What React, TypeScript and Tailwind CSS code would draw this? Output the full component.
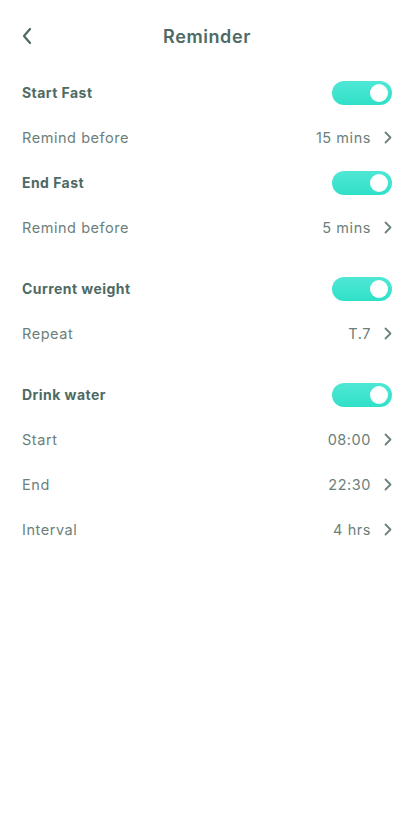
import React from "react";

const font = { fontFamily: "Inter, 'Open Sans', sans-serif" };

function Toggle() {
  return (
    <div className="w-[60px] h-[24px] rounded-full bg-gradient-to-b from-[#4ee8d5] to-[#2fe0c8] flex items-center justify-end pr-[4px]">
      <div className="w-[18px] h-[18px] rounded-full bg-white" />
    </div>
  );
}

function Chevron() {
  return (
    <svg width="8" height="13" viewBox="0 0 8 13" fill="none" className="ml-[13px]">
      <path d="M1.5 1.5L6.5 6.5L1.5 11.5" stroke="#6d827d" strokeWidth="1.8" strokeLinecap="round" strokeLinejoin="round" />
    </svg>
  );
}

function HeadRow({ label }: { label: string }) {
  return (
    <div className="h-[45px] flex items-center justify-between">
      <span className="text-[14px] font-bold text-[#4e6a64] tracking-[0.45px]">{label}</span>
      <Toggle />
    </div>
  );
}

function ValueRow({ label, value }: { label: string; value: string }) {
  return (
    <div className="h-[45px] flex items-center justify-between">
      <span className="text-[14.5px] text-[#6b807b] tracking-[0.55px]">{label}</span>
      <div className="flex items-center">
        <span className="text-[14.5px] text-[#6b807b] tracking-[0.55px]">{value}</span>
        <Chevron />
      </div>
    </div>
  );
}

export default function App() {
  return (
    <div className="w-[414px] min-h-[840px] bg-white" style={font}>
      <div className="h-[70px] relative flex items-center justify-center pt-[2px]">
        <svg width="12" height="18" viewBox="0 0 12 18" fill="none" className="absolute left-[21px] top-[27px]">
          <path d="M9 2L3 9L9 16" stroke="#4e6a64" strokeWidth="2.2" strokeLinecap="round" strokeLinejoin="round" />
        </svg>
        <span className="text-[18px] font-semibold text-[#4e6a64] tracking-[0.6px]">Reminder</span>
      </div>
      <div className="px-[22px] flex flex-col">
        <HeadRow label="Start Fast" />
        <ValueRow label="Remind before" value="15 mins" />
        <HeadRow label="End Fast" />
        <ValueRow label="Remind before" value="5 mins" />
        <div className="h-[16px]" />
        <HeadRow label="Current weight" />
        <ValueRow label="Repeat" value="T.7" />
        <div className="h-[16px]" />
        <HeadRow label="Drink water" />
        <ValueRow label="Start" value="08:00" />
        <ValueRow label="End" value="22:30" />
        <ValueRow label="Interval" value="4 hrs" />
      </div>
    </div>
  );
}
